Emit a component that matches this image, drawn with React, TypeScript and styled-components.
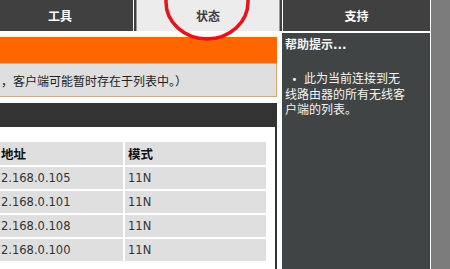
import React from 'react';
import styled, { createGlobalStyle } from 'styled-components';

const GlobalStyle = createGlobalStyle`
  html, body {
    margin: 0;
    padding: 0;
    background: #ffffff;
    overflow: hidden;
  }
  body {
    font-family: 'DejaVu Sans', 'Noto Sans CJK SC', sans-serif;
  }
`;

const cjk = `'DejaVu Sans', 'Noto Sans CJK SC', sans-serif`;

const Frame = styled.div`
  position: relative;
  display: flex;
  height: 269px;
  overflow: hidden;
`;

const Main = styled.div`
  display: flex;
  flex-direction: column;
  flex: none;
  width: 443px;
  margin-left: -13px;
`;

const TabBar = styled.div`
  display: flex;
  height: 31px;
  background: #404040;
`;

const Tab = styled.div<{ $active?: boolean; $width: number }>`
  display: flex;
  align-items: center;
  justify-content: center;
  box-sizing: border-box;
  width: ${(p) => p.$width}px;
  font: bold 12px ${cjk};
  color: ${(p) => (p.$active ? '#404040' : '#ffffff')};
  background: ${(p) => (p.$active ? '#ececec' : 'transparent')};
  border-left: ${(p) => (p.$active ? '1px solid #9a9a9a' : 'none')};
  border-right: ${(p) => (p.$active ? '1px solid #9a9a9a' : 'none')};
  margin: ${(p) => (p.$active ? '0 2px' : '0')};

  &.first {
    border-right: 1px solid #ffffff;
  }
  &.last {
    border-left: 1px solid #ffffff;
  }
`;

const Body = styled.div`
  display: flex;
  flex: 1;
  margin-top: 2px;
  gap: 5px;
`;

const Content = styled.div`
  display: flex;
  flex-direction: column;
  flex: none;
  width: 290px;
  padding-top: 4px;
`;

const OrangeBar = styled.div`
  height: 26px;
  background: #ff6600;
`;

const Notice = styled.div`
  display: flex;
  align-items: center;
  box-sizing: border-box;
  height: 34px;
  padding-left: 14px;
  background: #dfdfdf;
  border: 1px solid #f0a060;
  border-left: none;
  font: 12px ${cjk};
  color: #222;
  white-space: nowrap;
  overflow: hidden;
`;

const SectionBar = styled.div`
  height: 24px;
  margin-top: 6px;
  background: #333333;
`;

const TableArea = styled.div`
  flex: 1;
  padding-top: 13px;
  background: #ffffff;
  border-right: 2px solid #333333;
`;

const ClientTable = styled.table`
  width: 281px;
  border-collapse: separate;
  border-spacing: 2px;
  table-layout: fixed;
`;

const Cell = styled.td<{ $head?: boolean }>`
  height: ${(p) => (p.$head ? 23 : 22)}px;
  padding: 0 0 0 3px;
  background: #dfdfdf;
  box-sizing: border-box;
  font: ${(p) => (p.$head ? 'bold 12.5px' : '11.5px')} ${cjk};
  color: ${(p) => (p.$head ? '#111' : '#333')};
  white-space: nowrap;
  overflow: hidden;

  &.addr {
    padding-left: 12px;
  }
`;

const Sidebar = styled.div`
  flex: 1;
  padding: 4px 0 0 3px;
  background: #404444;
  color: #f4f4f4;
  font: 12px ${cjk};
`;

const HelpTitle = styled.div`
  font-weight: bold;
  line-height: 16px;
`;

const HelpText = styled.p`
  margin: 19px 0 0;
  line-height: 15.5px;
`;

const Bullet = styled.span`
  display: inline-block;
  width: 19px;
  text-align: center;
  font-size: 10px;
`;

const Gutter = styled.div`
  flex: 1;
  background: #7b7b7b;
  border-left: 1px solid #ffffff;
`;

const Mark = styled.svg`
  position: absolute;
  left: 0;
  top: 0;
  pointer-events: none;
`;

const clients = [
  { addr: '2.168.0.105', mode: '11N' },
  { addr: '2.168.0.101', mode: '11N' },
  { addr: '2.168.0.108', mode: '11N' },
  { addr: '2.168.0.100', mode: '11N' },
];

export default function App() {
  return (
    <>
      <GlobalStyle />
      <Frame>
        <Main>
          <TabBar>
            <Tab className="first" $width={147}>工具</Tab>
            <Tab $active $width={144}>状态</Tab>
            <Tab className="last" $width={148}>支持</Tab>
          </TabBar>
          <Body>
            <Content>
              <OrangeBar />
              <Notice>，客户端可能暂时存在于列表中。）</Notice>
              <SectionBar />
              <TableArea>
                <ClientTable>
                  <colgroup>
                    <col style={{ width: 134 }} />
                    <col />
                  </colgroup>
                  <tbody>
                    <tr>
                      <Cell $head className="addr">地址</Cell>
                      <Cell $head>模式</Cell>
                    </tr>
                    {clients.map((client, index) => (
                      <tr key={`client_${index}`}>
                        <Cell className="addr">{client.addr}</Cell>
                        <Cell>{client.mode}</Cell>
                      </tr>
                    ))}
                  </tbody>
                </ClientTable>
              </TableArea>
            </Content>
            <Sidebar>
              <HelpTitle>帮助提示...</HelpTitle>
              <HelpText>
                <Bullet>•</Bullet>此为当前连接到无<br />
                线路由器的所有无线客<br />
                户端的列表。
              </HelpText>
            </Sidebar>
          </Body>
        </Main>
        <Gutter />
        <Mark width={450} height={60}>
          <ellipse cx={207} cy={2} rx={41} ry={37} fill="none" stroke="#e3141c" strokeWidth={3.5} />
        </Mark>
      </Frame>
    </>
  );
}
